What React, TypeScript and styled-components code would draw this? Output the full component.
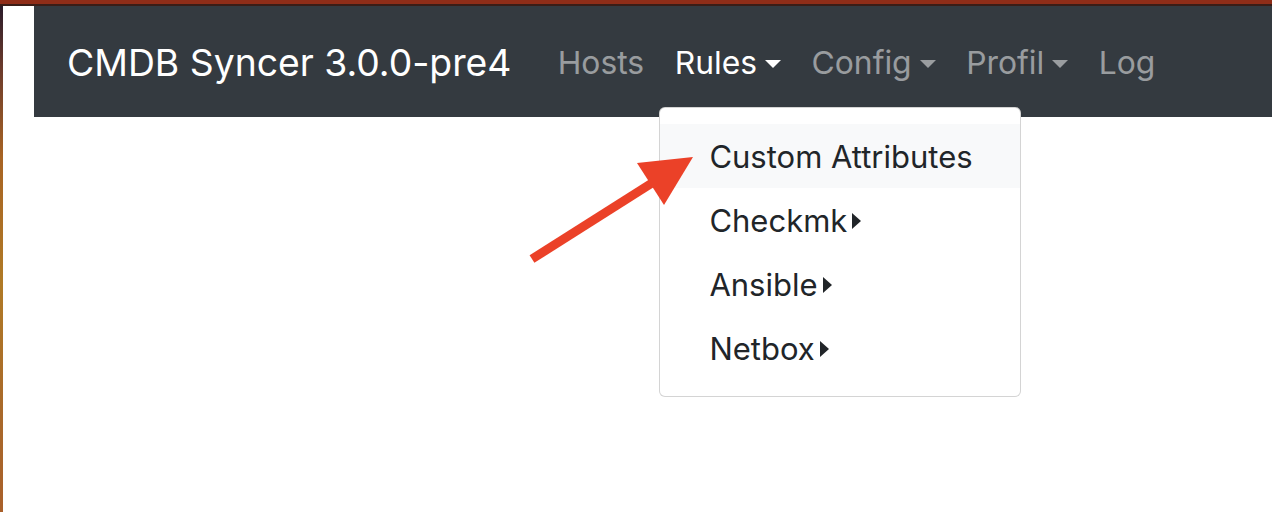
import React from "react";
import styled, { createGlobalStyle } from "styled-components";

const Global = createGlobalStyle`
  html, body { margin: 0; padding: 0; background: #fff; }
  body { font-family: "Inter", "Liberation Sans", sans-serif; }
`;

const Frame = styled.div`
  position: relative;
  width: 1272px;
  height: 512px;
  overflow: hidden;
  display: flex;
  flex-direction: column;
  background: #fff;
`;

const TopBand = styled.div`
  height: 4px;
  background: #8f2d18;
  border-bottom: 2px solid #3a1d17;
  flex: none;
`;

const Body = styled.div`
  flex: 1;
  display: flex;
`;

const SideBand = styled.div`
  width: 3px;
  flex: none;
  background: linear-gradient(180deg, #2b1c2a 0%, #6a3a2c 12%, #a86424 30%, #b07a26 55%, #a9692a 80%, #a9602a 100%);
`;

const Main = styled.div`
  flex: 1;
  padding-left: 31px;
  position: relative;
`;

const Navbar = styled.nav`
  height: 111px;
  background: #343a40;
  display: flex;
  align-items: center;
  padding-left: 33px;
  padding-top: 2px;
  box-sizing: border-box;
`;

const Brand = styled.div`
  color: #fff;
  font-size: 37.3px;
  margin-right: 31px;
  white-space: nowrap;
`;

const NavItem = styled.div`
  position: relative;
  height: 100%;
  display: flex;
  align-items: center;
`;

const NavLink = styled.a<{ $active?: boolean; $toggle?: boolean }>`
  display: inline-flex;
  align-items: center;
  padding: 0 15.3px;
  font-size: 31.8px;
  color: ${(p) => (p.$active ? "#ffffff" : "rgba(255,255,255,0.5)")};
  text-decoration: none;
  white-space: nowrap;
  &::after {
    content: ${(p) => (p.$toggle ? '""' : "none")};
    display: inline-block;
    margin-left: 8px;
    border-top: 8px solid currentColor;
    border-left: 8px solid transparent;
    border-right: 8px solid transparent;
    margin-top: 2px;
  }
`;

const Menu = styled.div`
  position: absolute;
  left: 0;
  top: 99px;
  width: 362px;
  height: 290px;
  box-sizing: border-box;
  background: #fff;
  border: 1px solid rgba(0, 0, 0, 0.17);
  border-radius: 6px;
  padding: 16px 0;
  display: flex;
  flex-direction: column;
  z-index: 2;
`;

const MenuItem = styled.div<{ $hover?: boolean }>`
  height: 64px;
  flex: none;
  display: flex;
  align-items: center;
  padding-left: 49px;
  font-size: 31px;
  color: #212529;
  background: ${(p) => (p.$hover ? "#f8f9fa" : "transparent")};
  white-space: nowrap;
`;

const SubCaret = styled.span`
  display: inline-block;
  margin-left: 5px;
  margin-top: 2px;
  border-left: 9px solid #212529;
  border-top: 8px solid transparent;
  border-bottom: 8px solid transparent;
`;

const Pointer = styled.svg`
  position: absolute;
  left: 0;
  top: 0;
  pointer-events: none;
  z-index: 3;
`;

export default function App() {
  return (
    <Frame>
      <Global />
      <TopBand />
      <Body>
        <SideBand />
        <Main>
          <Navbar>
            <Brand>CMDB Syncer 3.0.0-pre4</Brand>
            <NavItem>
              <NavLink>Hosts</NavLink>
            </NavItem>
            <NavItem>
              <NavLink $active $toggle>Rules</NavLink>
              <Menu>
                <MenuItem $hover>Custom Attributes</MenuItem>
                <MenuItem>Checkmk<SubCaret /></MenuItem>
                <MenuItem>Ansible<SubCaret /></MenuItem>
                <MenuItem>Netbox<SubCaret /></MenuItem>
              </Menu>
            </NavItem>
            <NavItem>
              <NavLink $toggle>Config</NavLink>
            </NavItem>
            <NavItem>
              <NavLink $toggle>Profil</NavLink>
            </NavItem>
            <NavItem>
              <NavLink>Log</NavLink>
            </NavItem>
          </Navbar>
        </Main>
      </Body>
      <Pointer width="1272" height="512" viewBox="0 0 1272 512">
        <line x1="532" y1="259" x2="652" y2="183" stroke="#eb4128" strokeWidth="9" />
        <polygon points="637,163 693,157 664,205" fill="#eb4128" />
      </Pointer>
    </Frame>
  );
}
